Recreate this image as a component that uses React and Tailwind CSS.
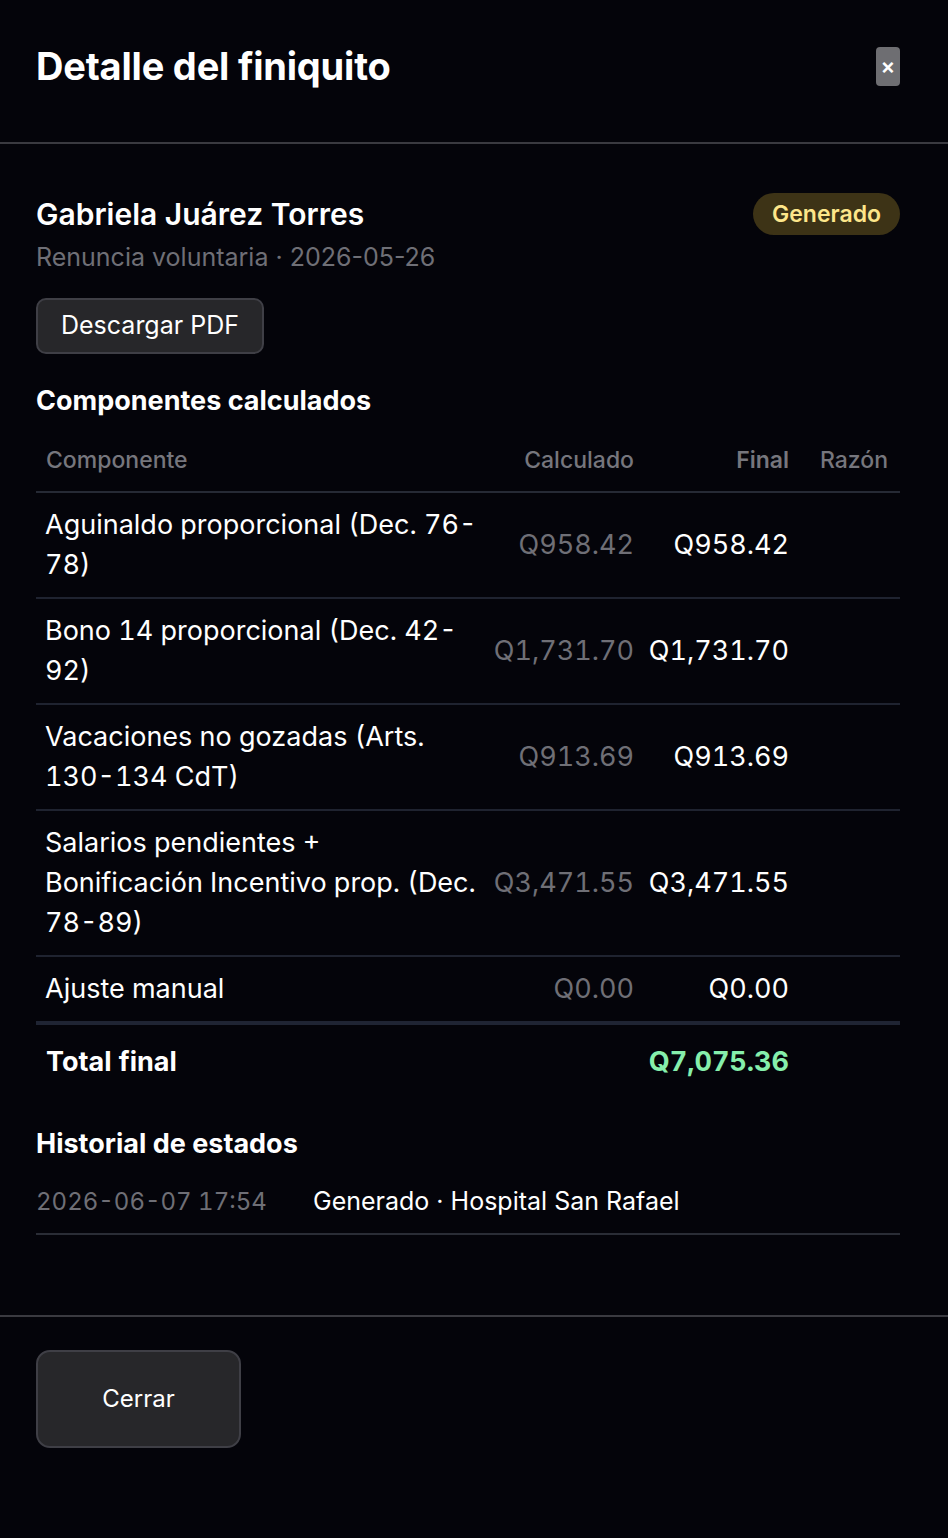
const rows = [
  { name: 'Aguinaldo proporcional (Dec. 76-78)', calc: 'Q958.42', final: 'Q958.42' },
  { name: 'Bono 14 proporcional (Dec. 42-92)', calc: 'Q1,731.70', final: 'Q1,731.70' },
  { name: 'Vacaciones no gozadas (Arts. 130-134 CdT)', calc: 'Q913.69', final: 'Q913.69' },
  { name: 'Salarios pendientes + Bonificación Incentivo prop. (Dec. 78-89)', calc: 'Q3,471.55', final: 'Q3,471.55' },
  { name: 'Ajuste manual', calc: 'Q0.00', final: 'Q0.00' },
];

export default function App() {
  return (
    <div className="min-h-[1538px] bg-[#04040a] text-white flex flex-col" style={{ fontFamily: 'Inter, "Noto Sans", sans-serif' }}>
      {/* header */}
      <div className="h-[144px] pb-[10px] flex items-center justify-between pl-[36px] pr-[48px] border-b-2 border-[#3a3a40]">
        <h1 className="text-[38px] font-bold tracking-[-0.2px]">Detalle del finiquito</h1>
        <button className="w-[24px] h-[39px] rounded-[4px] bg-[#6e6e72] text-white text-[22px] font-semibold flex items-center justify-center">×</button>
      </div>

      {/* body */}
      <div className="pl-[36px] pr-[48px] pt-[51px] flex-1">
        <div className="flex items-start justify-between">
          <div>
            <div className="text-[30px] font-semibold leading-[38px]">Gabriela Juárez Torres</div>
            <div className="text-[25px] text-[#6f6f76] mt-[7px] leading-[34px]">Renuncia voluntaria · 2026-05-26</div>
          </div>
          <span className="-mt-[2px] h-[42px] px-[19px] rounded-full bg-[#3d3316] text-[#fde68a] text-[23px] font-semibold flex items-center">Generado</span>
        </div>

        <button className="mt-[24px] h-[56px] px-[23px] rounded-[10px] bg-[#27272a] border-2 border-[#3f3f46] text-[25px]">Descargar PDF</button>

        <h2 className="mt-[29px] text-[27px] font-bold leading-[36px]">Componentes calculados</h2>

        <table className="mt-[11px] w-full table-fixed border-collapse" style={{ fontVariantNumeric: 'tabular-nums' }}>
          <colgroup>
            <col className="w-[452px]" />
            <col className="w-[156px]" />
            <col className="w-[155px]" />
            <col />
          </colgroup>
          <thead>
            <tr className="border-b-2 border-[#262a35] text-[23px] text-[#76767d]">
              <th className="text-left font-medium px-[10px] h-[62px]">Componente</th>
              <th className="text-right font-medium pr-[10px]">Calculado</th>
              <th className="text-right font-semibold pr-[10px]">Final</th>
              <th className="text-right font-medium pr-[12px]">Razón</th>
            </tr>
          </thead>
          <tbody className="text-[27px] leading-[40px]">
            {rows.map((r, i) => (
              <tr key={i} className={i === rows.length - 1 ? 'border-b-4 border-[#1f2433]' : 'border-b-2 border-[#1f2330]'}>
                <td className="pl-[9px] pr-[10px] py-[12px] align-middle">{r.name}</td>
                <td className="pr-[10px] text-right text-[#6f6f76] align-middle whitespace-nowrap">{r.calc}</td>
                <td className="pr-[10px] text-right align-middle whitespace-nowrap">{r.final}</td>
                <td></td>
              </tr>
            ))}
            <tr>
              <td className="px-[10px] h-[76px] font-bold">Total final</td>
              <td></td>
              <td className="pr-[10px] text-right font-bold text-[#86efac] whitespace-nowrap">Q7,075.36</td>
              <td></td>
            </tr>
          </tbody>
        </table>

        <h2 className="mt-[27px] text-[27px] font-bold leading-[36px]">Historial de estados</h2>
        <div className="mt-[9px] flex items-center h-[64px] border-b-2 border-[#2a2d36]">
          <span className="w-[277px] text-[24px] text-[#6f6f76]" style={{ fontVariantNumeric: 'tabular-nums' }}>2026-06-07 17:54</span>
          <span className="text-[25px]">Generado · Hospital San Rafael</span>
        </div>
      </div>

      {/* footer */}
      <div className="border-t-2 border-[#3a3a40] px-[36px] pt-[33px] pb-[90px]">
        <button className="w-[205px] h-[98px] rounded-[14px] bg-[#27272a] border-2 border-[#3f3f46] text-[24px]">Cerrar</button>
      </div>
    </div>
  );
}
